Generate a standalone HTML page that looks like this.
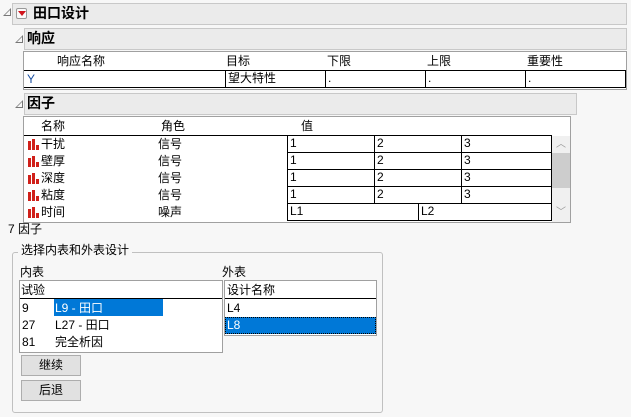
<!DOCTYPE html>
<html><head><meta charset="utf-8"><style>
body{margin:0;width:631px;height:417px;background:#f7f7f7;font-family:"Liberation Sans","Noto Sans CJK SC",sans-serif;font-size:12px;color:#000;position:relative;overflow:hidden}
.a{position:absolute}
.hdr{position:absolute;background:#ebebeb;border:1px solid #c8c8c8;box-sizing:border-box;font-weight:bold;font-size:14px;line-height:19px}
.tri{position:absolute;width:0;height:0;border-left:8px solid transparent;border-bottom:8px solid #777}
.tri:after{content:"";position:absolute;left:-6px;top:2px;border-left:5px solid transparent;border-bottom:5px solid #f7f7f7}
.box{position:absolute;background:#fff;border:1px solid #a0a0a0;box-sizing:border-box}
.t{position:absolute;white-space:nowrap;line-height:16px}
.hl{position:absolute;background:#000}
.c{position:absolute;border:1px solid #000;box-sizing:border-box;background:#fff;padding-left:2px;line-height:15px}
.btn{position:absolute;background:#e1e1e1;border:1px solid #adadad;box-sizing:border-box;text-align:center;line-height:19px;width:60px;height:21px}
.ic{position:absolute;width:12px;height:11px}
</style></head><body>
<div class="tri" style="left:3px;top:8px"></div>
<div class="hdr" style="left:12px;top:3px;width:615px;height:22px;padding-left:20px">田口设计</div>
<div class="a" style="left:16px;top:8px;width:11px;height:11px;border:1px solid #999;border-radius:2px;background:#fafafa;box-sizing:border-box"></div>
<div class="a" style="left:18px;top:11px;border-left:4px solid transparent;border-right:4px solid transparent;border-top:5px solid #d0141c"></div>

<div class="tri" style="left:15px;top:35px"></div>
<div class="hdr" style="left:24px;top:28px;width:603px;height:22px;padding-left:2px">响应</div>
<div class="box" style="left:23px;top:51px;width:604px;height:39px;border-color:#a0a0a0"></div>
<div class="t" style="left:57px;top:53px">响应名称</div>
<div class="t" style="left:226px;top:53px">目标</div>
<div class="t" style="left:327px;top:53px">下限</div>
<div class="t" style="left:427px;top:53px">上限</div>
<div class="t" style="left:527px;top:53px">重要性</div>
<div class="hl" style="left:24px;top:70px;width:602px;height:1px"></div>
<div class="hl" style="left:24px;top:87px;width:602px;height:1px"></div>
<div class="t" style="left:27px;top:71px;color:#1a4fa0">Y</div>
<div class="c" style="left:225px;top:70px;width:101px;height:18px">望大特性</div>
<div class="c" style="left:325px;top:70px;width:101px;height:18px">.</div>
<div class="c" style="left:425px;top:70px;width:101px;height:18px">.</div>
<div class="c" style="left:525px;top:70px;width:101px;height:18px">.</div>

<div class="tri" style="left:15px;top:100px"></div>
<div class="hdr" style="left:24px;top:93px;width:553px;height:22px;padding-left:2px">因子</div>
<div class="box" style="left:23px;top:116px;width:548px;height:107px"></div>
<div class="t" style="left:41px;top:118px">名称</div>
<div class="t" style="left:161px;top:118px">角色</div>
<div class="t" style="left:301px;top:118px">值</div>
<div class="hl" style="left:24px;top:135px;width:528px;height:1px"></div>
<div class="hl" style="left:287px;top:135px;width:1px;height:86px"></div>

<div id="rows"></div>
<div class="a" style="left:552px;top:136px;width:18px;height:86px;background:#f0f0f0"></div>
<div class="a" style="left:552px;top:153px;width:18px;height:35px;background:#cdcdcd"></div>
<div class="t" style="left:556px;top:137px;color:#999;font-size:10px">︿</div>
<div class="t" style="left:556px;top:205px;color:#999;font-size:10px">﹀</div>

<div class="t" style="left:8px;top:221px">7 因子</div>
<div class="a" style="left:12px;top:252px;width:371px;height:161px;border:1px solid #c0c0c0;border-radius:3px;box-sizing:border-box"></div>
<div class="t" style="left:18px;top:242px;background:#f7f7f7;padding:0 3px">选择内表和外表设计</div>
<div class="t" style="left:20px;top:264px">内表</div>
<div class="t" style="left:222px;top:264px">外表</div>
<div class="box" style="left:19px;top:280px;width:204px;height:73px"></div>
<div class="t" style="left:21px;top:282px">试验</div>
<div class="hl" style="left:20px;top:298px;width:202px;height:1px"></div>
<div class="a" style="left:54px;top:299px;width:109px;height:17px;background:#0078d7"></div>
<div class="t" style="left:22px;top:300px">9</div><div class="t" style="left:55px;top:300px;color:#fff">L9 - 田口</div>
<div class="t" style="left:22px;top:317px">27</div><div class="t" style="left:55px;top:317px">L27 - 田口</div>
<div class="t" style="left:22px;top:334px">81</div><div class="t" style="left:55px;top:334px">完全析因</div>
<div class="box" style="left:224px;top:280px;width:153px;height:56px"></div>
<div class="t" style="left:227px;top:282px">设计名称</div>
<div class="hl" style="left:225px;top:298px;width:151px;height:1px"></div>
<div class="t" style="left:227px;top:300px">L4</div>
<div class="a" style="left:225px;top:317px;width:151px;height:17px;background:#0078d7;outline:1px dotted #000;outline-offset:-1px"></div>
<div class="t" style="left:227px;top:317px;color:#fff">L8</div>
<div class="btn" style="left:21px;top:355px">继续</div>
<div class="btn" style="left:21px;top:380px">后退</div>

<script>
var n=["干扰","壁厚","深度","粘度","时间"],r=["信号","信号","信号","信号","噪声"],h="";
for(var i=0;i<5;i++){var y=136+i*17;
h+='<svg class="ic" style="left:28px;top:'+(y+3)+'px" viewBox="0 0 12 11"><rect x="0" y="2" width="3" height="9" fill="#d0201a"/><rect x="4" y="0" width="3" height="11" fill="#d0201a"/><rect x="8" y="6" width="3" height="5" fill="#d0201a"/></svg>';
h+='<div class="t" style="left:41px;top:'+y+'px">'+n[i]+'</div><div class="t" style="left:158px;top:'+y+'px">'+r[i]+'</div>';
if(i<4){h+='<div class="c" style="left:287px;top:'+(y-1)+'px;width:89px;height:18px">1</div><div class="c" style="left:374px;top:'+(y-1)+'px;width:88px;height:18px">2</div><div class="c" style="left:461px;top:'+(y-1)+'px;width:91px;height:18px">3</div>';}
else{h+='<div class="c" style="left:287px;top:'+(y-1)+'px;width:132px;height:18px">L1</div><div class="c" style="left:418px;top:'+(y-1)+'px;width:134px;height:18px">L2</div>';}}
document.getElementById("rows").innerHTML=h;
</script>
</body></html>
